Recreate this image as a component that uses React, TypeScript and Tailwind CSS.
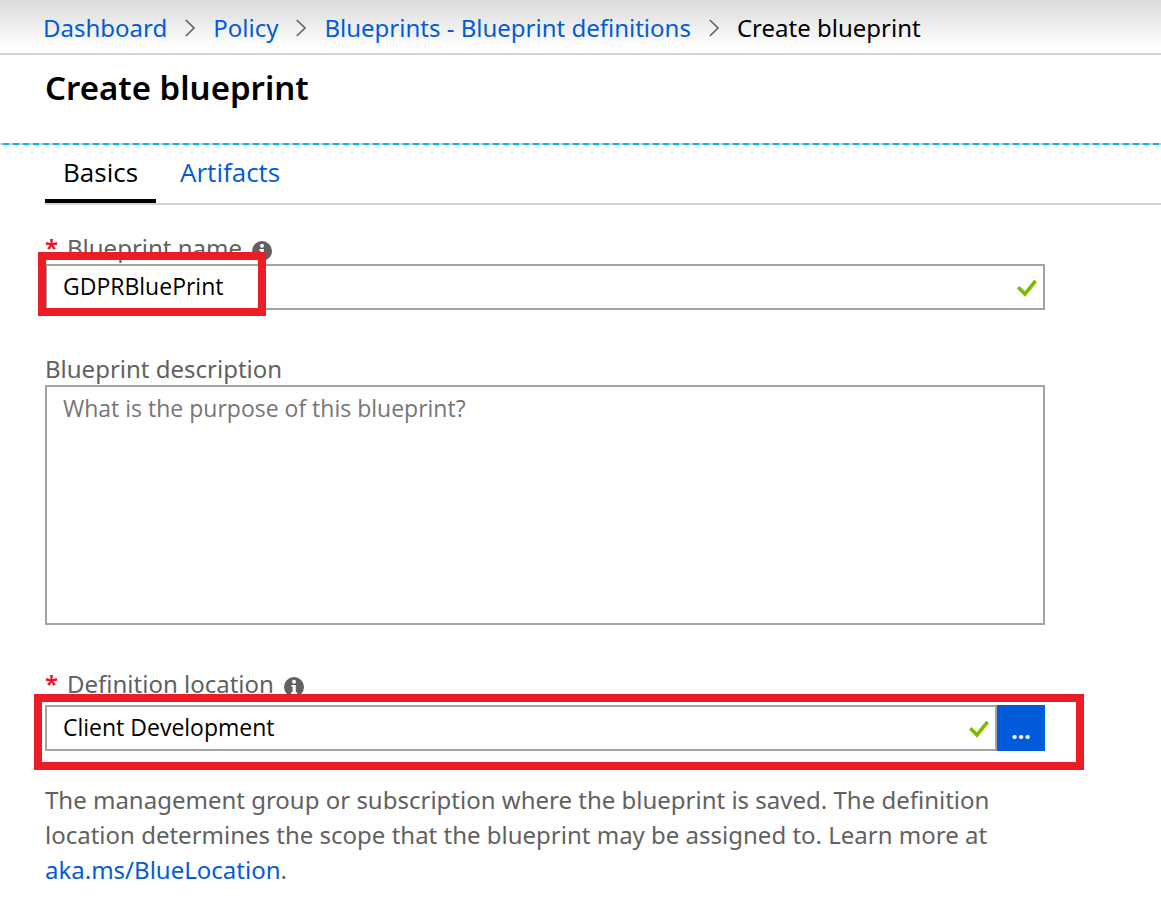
import type { ReactNode } from "react";

const LINK = "text-[#015cda] hover:underline";
const INPUT = "h-full min-w-0 flex-1 px-4 pb-[2px] font-['Open_Sans',sans-serif] text-[23px] outline-none";

function Chevron() {
  return (
    <svg viewBox="0 0 10 18" className="h-[18px] w-[10px] shrink-0" fill="none" stroke="#666" strokeWidth="1.7" aria-hidden="true">
      <path d="M.8 1 9 9 .8 17" />
    </svg>
  );
}

function Check() {
  return (
    <svg viewBox="0 0 20 20" className="size-5 shrink-0" fill="none" stroke="#7fba00" strokeWidth="3.6" aria-hidden="true">
      <path d="M1.2 10.2 8 17 18.6 3.8" />
    </svg>
  );
}

function Info() {
  return (
    <svg viewBox="0 0 20 20" className="mt-[6px] size-5 shrink-0" role="img" aria-label="More information">
      <circle cx="10" cy="10" r="10" fill="#616161" />
      <circle cx="10" cy="4.8" r="2" fill="#fff" />
      <path d="M7.4 8h4.4v7.2h1.4V17H7v-1.8h1.6V9.8H7.4z" fill="#fff" />
    </svg>
  );
}

function Label({ htmlFor, required, children }: { htmlFor: string; required?: boolean; children: ReactNode }) {
  return (
    <div className="flex h-[34px] items-center pt-px text-[24px] text-[#616161]">
      {required && <span className="w-[22px] font-semibold text-[#e81123]">*</span>}
      <label htmlFor={htmlFor}>{children}</label>
      {required && (
        <span className="ml-[10px]">
          <Info />
        </span>
      )}
    </div>
  );
}

export default function App() {
  return (
    <div className="min-h-screen bg-white font-['Noto_Sans','Open_Sans',sans-serif] text-black">
      <nav aria-label="Breadcrumb" className="border-b-2 border-[#d5d5d5] bg-linear-to-b from-[#dadada] to-white to-90%">
        <ol className="flex h-[53px] items-center gap-[18px] pt-[3px] pl-[43px] text-[24px] whitespace-nowrap">
          <li><a href="#dashboard" className={LINK}>Dashboard</a></li>
          <li><Chevron /></li>
          <li><a href="#policy" className={LINK}>Policy</a></li>
          <li><Chevron /></li>
          <li><a href="#definitions" className={LINK}>Blueprints - Blueprint definitions</a></li>
          <li><Chevron /></li>
          <li aria-current="page">Create blueprint</li>
        </ol>
      </nav>

      <header className="h-[88px] px-[45px] pt-2">
        <h1 className="text-[33px] leading-[50px] font-semibold">Create blueprint</h1>
      </header>
      <div className="h-[2px] bg-[repeating-linear-gradient(90deg,#ccc_0_3px,#00b7ef_3px_9px,#ccc_9px_10px)]" />

      <div role="tablist" className="ml-[45px] flex h-[60px] border-b-2 border-[#d5d5d5] font-['Open_Sans',sans-serif] text-[26px]">
        <button role="tab" aria-selected="true" className="border-b-4 border-black px-[18px]">Basics</button>
        <button role="tab" aria-selected="false" className="border-b-4 border-transparent px-6 text-[#015cda]">Artifacts</button>
      </div>

      <form className="mr-[116px] ml-[45px] pt-[25px] pb-5" onSubmit={(e) => e.preventDefault()}>
        <Label htmlFor="name" required>Blueprint name</Label>
        <div className="relative flex h-[46px] items-center border-2 border-[#a3a3a3] pr-[6px]">
          <input id="name" defaultValue="GDPRBluePrint" className={INPUT} />
          <Check />
          <div className="pointer-events-none absolute -top-[14px] -left-[9px] h-16 w-[228px] border-8 border-[#ed1c24]" />
        </div>

        <div className="mt-[41px]">
          <Label htmlFor="description">Blueprint description</Label>
          <textarea
            id="description"
            placeholder="What is the purpose of this blueprint?"
            className="block h-60 w-full resize-none border-2 border-[#a3a3a3] px-4 py-[5px] font-['Open_Sans',sans-serif] text-[23px] leading-8 outline-none placeholder:text-[#767676]"
          />
        </div>

        <div className="mt-[41px] flex flex-col gap-[5px]">
          <Label htmlFor="location" required>Definition location</Label>
          <div className="relative flex h-[46px]">
            <div className="flex min-w-0 flex-1 items-center border-2 border-[#a3a3a3] pr-[6px]">
              <input id="location" defaultValue="Client Development" className={INPUT} />
              <Check />
            </div>
            <button type="button" aria-label="Browse locations" className="w-12 bg-[#015cda] pt-1 text-[23px] font-bold text-white">...</button>
            <div className="pointer-events-none absolute -top-[11px] -right-[39px] -bottom-[19px] -left-[11px] border-8 border-[#ed1c24]" />
          </div>
        </div>

        <p className="mt-[31px] text-[24px] leading-[35px] text-[#616161]">
          The management group or subscription where the blueprint is saved. The definition location determines the scope that the blueprint may be assigned to. Learn more at <a href="#location-help" className={LINK}>aka.ms/BlueLocation</a>.
        </p>
      </form>
    </div>
  );
}
